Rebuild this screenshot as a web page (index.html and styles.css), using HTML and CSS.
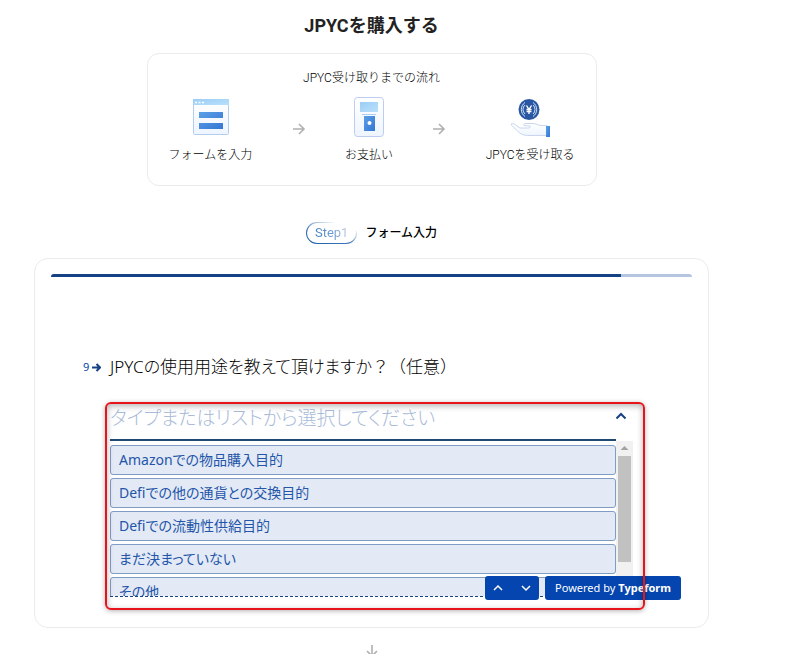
FILE: index.html
```html
<!DOCTYPE html>
<html lang="ja">

<head>
    <meta charset="UTF-8">
    <meta name="viewport" content="width=device-width, initial-scale=1.0">
    <title>JPYCを購入する</title>
    <link rel="stylesheet" href="styles.css">
</head>

<body>

    <main>
        <h1>JPYCを購入する</h1>

        <section class="flow">
            <h2>JPYC受け取りまでの流れ</h2>
            <ol class="flow-steps">
                <li class="flow-step">
                    <svg width="44" height="44" viewBox="0 0 44 44" aria-hidden="true">
                        <defs>
                            <linearGradient id="sky" x1="0" y1="0" x2="1" y2="1">
                                <stop offset="0" stop-color="#9ccdf5" />
                                <stop offset="1" stop-color="#b9e0fb" />
                            </linearGradient>
                            <linearGradient id="blue" x1="0" y1="0" x2="1" y2="1">
                                <stop offset="0" stop-color="#5b9fe6" />
                                <stop offset="1" stop-color="#3476d4" />
                            </linearGradient>
                            <linearGradient id="pale" x1="0" y1="0" x2="0" y2="1">
                                <stop offset="0" stop-color="#fff" />
                                <stop offset="1" stop-color="#eef5ff" />
                            </linearGradient>
                        </defs>
                        <rect x="5.5" y="4.5" width="35" height="35" rx="1" fill="url(#pale)" stroke="#b3cdec" />
                        <path d="M5 4h36v6H5z" fill="url(#sky)" />
                        <path d="M7 7.5h2M10.5 7.5h2M14 7.5h2" stroke="#fff" stroke-width="1.5" />
                        <path d="M11 17h24v6H11zM11 28h24v6H11z" fill="url(#blue)" />
                    </svg>
                    <span>フォームを入力</span>
                </li>
                <li class="flow-arrow">
                    <svg width="14" height="14" viewBox="0 0 14 14" aria-hidden="true">
                        <path d="M1 7h11M7 2l5 5-5 5" />
                    </svg>
                </li>
                <li class="flow-step">
                    <svg width="44" height="44" viewBox="0 0 44 44" aria-hidden="true">
                        <rect x="7.5" y="2.5" width="29" height="39" rx="3" fill="url(#pale)" stroke="#bccdf0" />
                        <path d="M13 7h18v10H13z" fill="url(#sky)" />
                        <path d="M15 19.5h14" stroke="#a9cff2" />
                        <path d="M17 21h11v15H17z" fill="url(#blue)" />
                        <circle cx="22.5" cy="28" r="2" fill="#fff" />
                    </svg>
                    <span>お支払い</span>
                </li>
                <li class="flow-arrow">
                    <svg width="14" height="14" viewBox="0 0 14 14" aria-hidden="true">
                        <path d="M1 7h11M7 2l5 5-5 5" />
                    </svg>
                </li>
                <li class="flow-step">
                    <svg width="44" height="44" viewBox="0 0 44 44" aria-hidden="true">
                        <circle cx="21" cy="14.5" r="10.5" fill="#2a57a3" />
                        <g fill="none" stroke="#d5e3f7" stroke-width="1">
                            <path d="M17 7.5a8.5 8.5 0 0 0 0 14M25 7.5a8.5 8.5 0 0 1 0 14" />
                            <path d="M17 10a6 6 0 0 0 0 9M25 10a6 6 0 0 1 0 9" />
                        </g>
                        <path d="M18.5 10.5l2.5 4 2.5-4M21 14v5M18.5 14.5h5M18.5 16.5h5" fill="none" stroke="#fff" stroke-width="1.4" />
                        <path d="M3 29c2-1 4 0 6 2l3 2h8c2 0 3-1 2-2l-6-.5c-1-1 0-2 2-2h7c3 0 5 2 8 2h6v10H21c-8 0-10-3-13-6-2-2-4-3-5-5.5z" fill="url(#pale)" stroke="#bccce9" stroke-width=".8" />
                        <path d="M38 31h4v11h-4z" fill="url(#blue)" />
                    </svg>
                    <span>JPYCを受け取る</span>
                </li>
            </ol>
        </section>

        <div class="step-title">
            <span class="step-badge"><span>Step1</span></span>
            <h2>フォーム入力</h2>
        </div>

        <section class="form-card">
            <div class="progress">
                <div class="progress-bar" style="width: 89%"></div>
            </div>

            <form class="question">
                <div class="question-title">
                    <span class="question-number">9
                        <svg width="9" height="9" viewBox="0 0 9 9" aria-hidden="true">
                            <path d="M0 4.5h7.5M4.5 1L8 4.5 4.5 8" />
                        </svg>
                    </span>
                    <label for="usage">JPYCの使用用途を教えて頂けますか<span class="optional">？（任意）</span></label>
                </div>

                <div class="dropdown">
                    <div class="dropdown-field">
                        <input type="text" id="usage" placeholder="タイプまたはリストから選択してください" autocomplete="off">
                        <button type="button" class="dropdown-toggle" aria-label="閉じる">
                            <svg width="12" height="8" viewBox="0 0 12 8" aria-hidden="true">
                                <path d="M1.5 6.5L6 2l4.5 4.5" />
                            </svg>
                        </button>
                    </div>
                    <div class="dropdown-list">
                        <div class="options">
                            <button type="button">Amazonでの物品購入目的</button>
                            <button type="button">Defiでの他の通貨との交換目的</button>
                            <button type="button">Defiでの流動性供給目的</button>
                            <button type="button">まだ決まっていない</button>
                            <button type="button">その他</button>
                        </div>
                        <div class="scrollbar">
                            <div class="scrollbar-arrow"></div>
                            <div class="scrollbar-thumb"></div>
                        </div>
                    </div>
                    <div class="highlight"></div>
                </div>
            </form>

            <div class="form-footer">
                <div class="form-nav">
                    <button type="button" aria-label="前へ">
                        <svg width="12" height="8" viewBox="0 0 12 8" aria-hidden="true">
                            <path d="M1 6l4-4 4 4" />
                        </svg>
                    </button>
                    <button type="button" aria-label="次へ">
                        <svg width="12" height="8" viewBox="0 0 12 8" aria-hidden="true">
                            <path d="M2 2l4 4 4-4" />
                        </svg>
                    </button>
                </div>
                <a class="powered" href="#">Powered by <b>Typeform</b></a>
            </div>
        </section>

        <div class="next-arrow">
            <svg width="14" height="14" viewBox="0 0 14 14" aria-hidden="true">
                <path d="M7 1v11M2 7l5 5 5-5" />
            </svg>
        </div>
    </main>

</body>

</html>
```

FILE: styles.css
```css
:root {
    --blue: #0445af;
    --navy: #154284;
    --text: #222;
    --border: #ebebeb;
    --option: #e3eaf6;
    --form-font: "Noto Sans", "Noto Sans CJK JP", sans-serif;
}

* {
    box-sizing: border-box;
}

body {
    margin: 0;
    background-color: #fff;
    color: var(--text);
    font-family: Roboto, "Noto Sans CJK JP", sans-serif;
    font-size: 12px;
    line-height: 16px;
}

main {
    padding: 13px 93px 0 34px;
}

h1,
h2,
ol {
    margin: 0;
    padding: 0;
}

h1 {
    font-size: 18px;
    line-height: 26px;
    text-align: center;
}

button {
    border: 0;
    padding: 0;
    background: none;
    font: inherit;
    color: inherit;
    cursor: pointer;
}

svg {
    display: block;
}

/* 受け取りまでの流れ */
.flow {
    max-width: 450px;
    margin: 14px auto 0;
    padding: 16px 21px 22px;
    border: 1px solid var(--border);
    border-radius: 12px;
    font-weight: 300;
    color: #000;
}

.flow h2 {
    font-size: 12px;
    font-weight: 300;
    text-align: center;
}

.flow-steps {
    display: flex;
    justify-content: space-between;
    align-items: center;
    margin-top: 9px;
    list-style: none;
}

.flow-step {
    display: flex;
    flex-direction: column;
    align-items: center;
    gap: 8px;
}

.flow-arrow svg,
.next-arrow svg {
    fill: none;
    stroke: #b0b0b0;
    stroke-width: 1.6;
}

/* Step1 */
.step-title {
    display: flex;
    justify-content: center;
    align-items: center;
    gap: 8px;
    margin-top: 36px;
}

.step-title h2 {
    font-size: 12px;
    font-weight: 500;
    color: #000;
}

.step-badge {
    padding: 2px 8px;
    border: 1px solid transparent;
    border-radius: 11px;
    background: linear-gradient(#fff, #fff) padding-box, linear-gradient(20deg, #1c5fa8, #3d76b8 40%, #fff 80%) border-box;
    font-size: 13px;
}

.step-badge span {
    background: linear-gradient(90deg, #3f80c0, #7ba3d4 65%, #c3d0e6);
    background-clip: text;
    color: transparent;
}

/* フォーム */
.form-card {
    position: relative;
    margin-top: 14px;
    padding: 15px 16px 30px;
    border: 1px solid var(--border);
    border-radius: 14px;
    font-family: var(--form-font);
}

.progress {
    height: 3px;
    border-radius: 4px 4px 0 0;
    background-color: #b4c6df;
    overflow: hidden;
}

.progress-bar {
    height: 100%;
    background-color: var(--navy);
}

.question {
    padding: 77px 59px 0 32px;
}

.question-title {
    display: flex;
    align-items: center;
    font-size: 17px;
    line-height: 26px;
    font-feature-settings: "palt";
    font-weight: 300;
    color: #000;
}

.optional {
    font-feature-settings: normal;
}

.question-number {
    display: flex;
    flex: 0 0 27px;
    align-items: center;
    gap: 3px;
    font-size: 11px;
    font-weight: 400;
    color: var(--blue);
}

.question-number svg {
    fill: none;
    stroke: var(--navy);
    stroke-width: 2;
}

.dropdown {
    position: relative;
    margin-left: 27px;
    border-bottom: 1px dashed var(--navy);
}

.dropdown-field {
    display: flex;
    align-items: center;
    margin: 23px 17px 0 0;
    padding-bottom: 4px;
    border-bottom: 2px solid #1f4a72;
}

.dropdown-field input {
    flex: 1;
    min-width: 0;
    height: 32px;
    padding: 0 0 2px;
    border: 0;
    outline: 0;
    background: none;
    font-family: inherit;
    font-size: 19px;
    font-weight: 300;
    font-feature-settings: "palt";
    color: var(--blue);
}

.dropdown-field input::placeholder {
    color: #a9bbd8;
}

.dropdown-toggle {
    margin-right: -11px;
    padding-bottom: 6px;
}

.dropdown-toggle svg {
    fill: none;
    stroke: var(--navy);
    stroke-width: 2;
}

.dropdown-list {
    display: flex;
    height: 155px;
    overflow: hidden;
}

.options {
    display: flex;
    flex: 1;
    flex-direction: column;
    gap: 3px;
    padding-top: 4px;
}

.options button {
    flex: 0 0 30px;
    padding: 0 8px;
    border: 1px solid #7f9cc5;
    border-radius: 3px;
    background-color: var(--option);
    font-size: 14px;
    line-height: 28px;
    font-feature-settings: "palt";
    text-align: left;
    color: #2355a8;
}

.scrollbar {
    width: 17px;
    padding: 0 2px;
    background-color: #f1f1f1;
}

.scrollbar-arrow {
    width: 8px;
    height: 4px;
    margin: 5px auto 6px;
    background-color: #a3a3a3;
    clip-path: polygon(50% 0, 100% 100%, 0 100%);
}

.scrollbar-thumb {
    height: 106px;
    background-color: #c1c1c1;
}

/* 選択欄を囲む赤枠 */
.highlight {
    position: absolute;
    z-index: 2;
    inset: -1px -12px -14px -5px;
    border: 2px solid #e8141c;
    border-radius: 6px;
    box-shadow: 0 1px 5px rgba(0, 0, 0, 0.3), inset 0 2px 6px rgba(0, 0, 0, 0.3);
    pointer-events: none;
}

.form-footer {
    position: absolute;
    right: 27px;
    bottom: 27px;
    display: flex;
    gap: 6px;
    font-size: 11px;
    line-height: 24px;
    color: #fff;
}

.form-nav,
.powered {
    display: flex;
    height: 24px;
    border-radius: 3px;
    background-color: var(--blue);
}

.form-nav button {
    padding: 0 8px;
    width: 27px;
}

.form-nav svg {
    fill: none;
    stroke: #fff;
    stroke-width: 1.5;
}

.powered {
    gap: 3px;
    padding: 0 10px;
    color: #fff;
    text-decoration: none;
}

.next-arrow {
    display: flex;
    justify-content: center;
    height: 10px;
    margin-top: 16px;
    overflow: hidden;
}
```
